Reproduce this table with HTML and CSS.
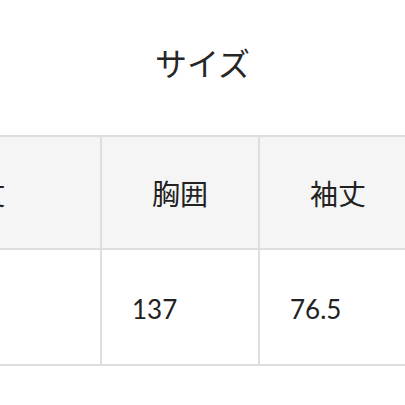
FILE: index.html
```html
<!DOCTYPE html>
<html lang="ja">
<head>
<meta charset="utf-8">
<link rel="stylesheet" href="styles.css">
</head>
<body>
<div class="page">
  <h2 class="title">サイズ</h2>
  <div class="scroller">
    <table class="size-table">
      <thead>
        <tr>
          <th class="c1">着丈</th>
          <th class="c2">胸囲</th>
          <th class="c3">袖丈</th>
        </tr>
      </thead>
      <tbody>
        <tr>
          <td class="c1"></td>
          <td class="c2">137</td>
          <td class="c3">76.5</td>
        </tr>
      </tbody>
    </table>
  </div>
</div>
</body>
</html>
```

FILE: styles.css
```css
html, body {
  margin: 0;
  padding: 0;
  background: #ffffff;
}
.page {
  width: 405px;
  height: 405px;
  overflow: hidden;
  font-family: Lato, "Noto Sans CJK JP", sans-serif;
  color: #222222;
}
.title {
  margin: 0;
  padding-top: 40px;
  height: 52px;
  line-height: 44px;
  font-size: 32px;
  font-weight: 400;
  text-align: center;
  color: #262626;
  font-family: "Noto Sans CJK JP", sans-serif;
}
.scroller {
  margin-top: 43px;
  overflow: hidden;
}
.size-table {
  border-collapse: collapse;
  margin-left: -147px;
  table-layout: fixed;
  width: 564px;
}
.size-table th,
.size-table td {
  border: 2px solid #dedede;
  font-weight: 400;
  color: #222222;
}
.size-table th {
  background: #f5f5f5;
  height: 111px;
  text-align: center;
  font-family: "Noto Sans CJK JP", sans-serif;
  font-size: 28px;
  padding: 0;
}
.size-table td {
  height: 110px;
  text-align: left;
  font-size: 26px;
  padding: 4px 0 0 30px;
}
.c1 { width: 245px; }
.c2 { width: 156px; }
.c3 { width: 156px; }
```
